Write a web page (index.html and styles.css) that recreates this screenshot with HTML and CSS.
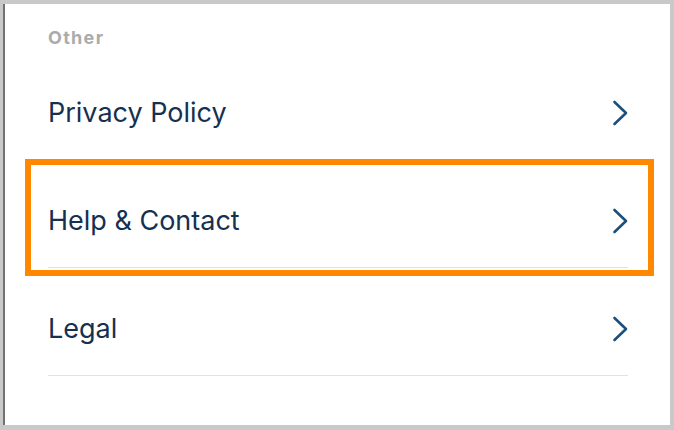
FILE: index.html
```html
<!DOCTYPE html>
<html lang="en">
<head>
<meta charset="utf-8">
<title>Other</title>
<link rel="stylesheet" href="styles.css">
</head>
<body>
<div class="panel">
  <div class="section-title">Other</div>
  <ul class="menu">
    <li class="row">
      <span class="label">Privacy Policy</span>
      <svg class="chev" viewBox="0 0 16 26" width="16" height="26"><polyline points="2.5,2 14,13 2.5,24"/></svg>
    </li>
    <li class="row row-highlight">
      <span class="label">Help &amp; Contact</span>
      <svg class="chev" viewBox="0 0 16 26" width="16" height="26"><polyline points="2.5,2 14,13 2.5,24"/></svg>
      <span class="highlight"></span>
    </li>
    <li class="row">
      <span class="label">Legal</span>
      <svg class="chev" viewBox="0 0 16 26" width="16" height="26"><polyline points="2.5,2 14,13 2.5,24"/></svg>
    </li>
  </ul>
</div>
</body>
</html>
```
FILE: styles.css
```css
html, body {
  margin: 0;
  padding: 0;
}
body {
  background: #c9c9c9;
  width: 674px;
  height: 430px;
  overflow: hidden;
  font-family: Inter, "Noto Sans", sans-serif;
}
.panel {
  margin: 4px 4px 0 3px;
  height: 421px;
  background: #ffffff;
  border-left: 2px solid #727272;
  padding: 24px 42px 0 43px;
  box-sizing: border-box;
}
.section-title {
  font-size: 18px;
  line-height: 20px;
  font-weight: 700;
  letter-spacing: 1.3px;
  color: #ababab;
  height: 24px;
}
.menu {
  list-style: none;
  margin: 0;
  padding: 0;
}
.row {
  position: relative;
  height: 108px;
  box-sizing: border-box;
  padding-top: 15px;
  border-bottom: 1px solid #e2e2e2;
  display: flex;
  align-items: center;
  justify-content: space-between;
}
.label {
  font-size: 27px;
  line-height: 32px;
  color: #16304f;
}
.chev {
  display: block;
  margin-right: 0;
}
.chev polyline {
  fill: none;
  stroke: #1d4f7c;
  stroke-width: 2.6;
  stroke-linecap: round;
  stroke-linejoin: round;
}
.highlight {
  position: absolute;
  left: -23px;
  top: -1px;
  width: 629px;
  height: 117px;
  border: 6px solid #ff8800;
  box-sizing: border-box;
  pointer-events: none;
}
```
